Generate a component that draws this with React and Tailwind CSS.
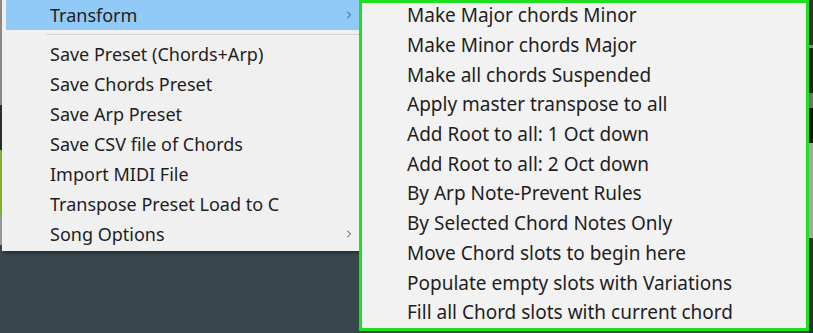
import { ChevronRight } from "lucide-react";

const mainItems = [
  { label: "Save Preset (Chords+Arp)" },
  { label: "Save Chords Preset" },
  { label: "Save Arp Preset" },
  { label: "Save CSV file of Chords" },
  { label: "Import MIDI File" },
  { label: "Transpose Preset Load to C" },
  { label: "Song Options", sub: true },
];

const transformItems = [
  "Make Major chords Minor",
  "Make Minor chords Major",
  "Make all chords Suspended",
  "Apply master transpose to all",
  "Add Root to all: 1 Oct down",
  "Add Root to all: 2 Oct down",
  "By Arp Note-Prevent Rules",
  "By Selected Chord Notes Only",
  "Move Chord slots to begin here",
  "Populate empty slots with Variations",
  "Fill all Chord slots with current chord",
];

function MenuRow({ label, sub, active }) {
  return (
    <div
      className={`flex items-center h-[30px] pl-[44px] pr-[4px] ${active ? "bg-[#91c9f7]" : ""}`}
    >
      <span className="flex-1 text-[18px] text-[#1e1e1e] leading-none">{label}</span>
      {sub && <ChevronRight className="size-[12px] text-[#4a4a4a]" strokeWidth={2} />}
    </div>
  );
}

export default function App() {
  return (
    <div
      className="w-[813px] h-[333px] flex bg-[#38464d] overflow-hidden"
      style={{ fontFamily: '"Noto Sans", "Open Sans", sans-serif' }}
    >
      {/* app peeking out on the left */}
      <div className="w-[2px] flex flex-col shrink-0">
        <div className="h-[105px] bg-[#8a8a8a]" />
        <div className="h-[45px] bg-[#2a2f2c]" />
        <div className="h-[65px] bg-[#7cb32e]" />
        <div className="h-[30px] bg-[#9a9a9a]" />
        <div className="flex-1 bg-[#38464d]" />
      </div>

      <div className="w-[357px] shrink-0 flex flex-col">
        <div className="h-[251px] bg-[#f0f0f0] shadow-[2px_2px_3px_rgba(0,0,0,0.35)] pl-[4px]">
          <MenuRow label="Transform" sub active />
          <div className="h-[9px] flex items-center pl-[40px]">
            <div className="h-px w-full bg-[#d4d4d4]" />
          </div>
          {mainItems.map((it) => (
            <MenuRow key={it.label} label={it.label} sub={it.sub} />
          ))}
        </div>
      </div>

      <div className="w-[450px] h-[331px] shrink-0 border-[3px] border-[#1fe01f] bg-[#f2f2f2]">
        {transformItems.map((t) => (
          <div key={t} className="h-[29.7px] flex items-center pl-[45px] pb-[4px]">
            <span className="text-[19px] text-[#1e1e1e] leading-none">{t}</span>
          </div>
        ))}
      </div>

      <div className="flex-1 flex flex-col">
        <div className="h-[45px] bg-[#2c3331]" />
        <div className="h-[3px] bg-[#8a8a8a]" />
        <div className="h-[45px] bg-[#1e2422]" />
        <div className="h-[15px] bg-[#6f7471]" />
        <div className="h-[35px] bg-[#101412]" />
        <div className="h-[95px] bg-[#a6a8a6]" />
        <div className="flex-1 bg-[#2b3633]" />
      </div>
    </div>
  );
}
